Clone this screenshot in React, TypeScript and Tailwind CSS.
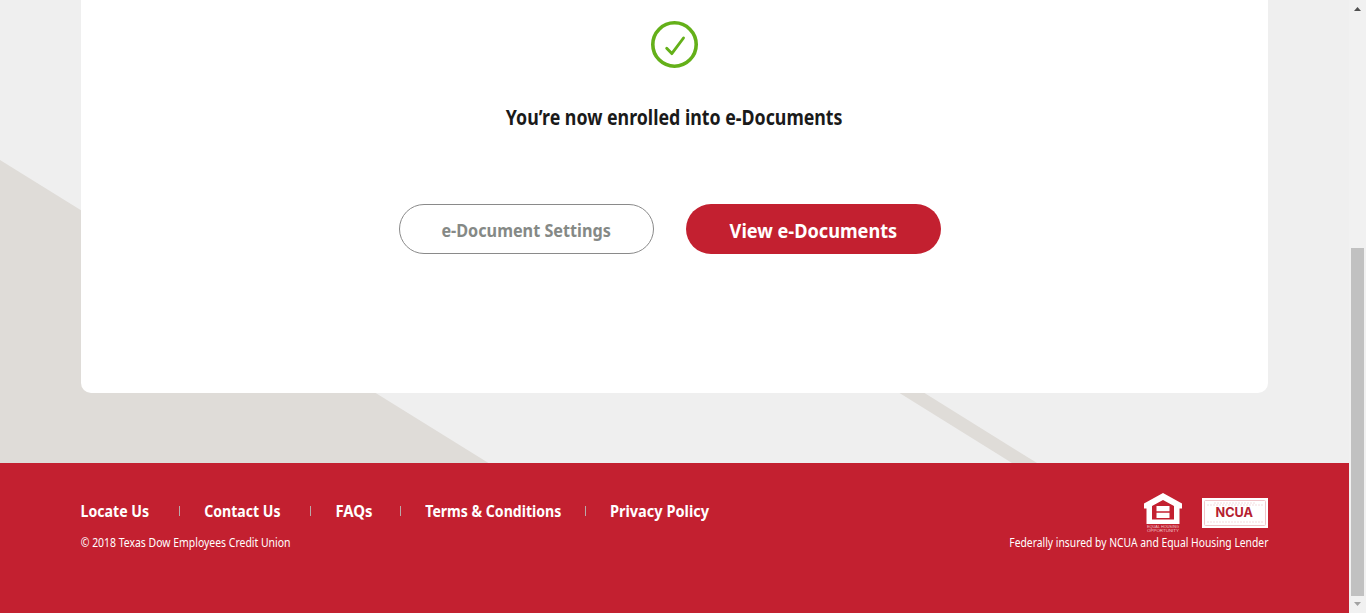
import type { ReactNode } from "react";

function Fit({ box, children, scale }: { box: string; scale: string; children: ReactNode }) {
  return (
    <span className={`flex justify-center whitespace-nowrap ${box}`}>
      <span className={`shrink-0 ${scale}`}>{children}</span>
    </span>
  );
}

const links = [
  { label: "Locate Us", box: "w-[68px]", scale: "scale-x-[0.885]", gap: "ml-[30px] mr-6" },
  { label: "Contact Us", box: "w-[77px]", scale: "scale-x-[0.88]", gap: "ml-[29px] mr-6" },
  { label: "FAQs", box: "w-[37px]", scale: "scale-x-[0.93]", gap: "ml-7 mr-6" },
  { label: "Terms & Conditions", box: "w-[136px]", scale: "scale-x-[0.88]", gap: "ml-6 mr-6" },
  { label: "Privacy Policy", box: "w-[100px]", scale: "scale-x-[0.91]", gap: "" },
];

function Backdrop() {
  return (
    <svg className="absolute inset-0" width="1349" height="463" viewBox="0 0 1349 463">
      <path fill="#dfdcd8" d="M0 160L488.500 463H0zM899.500 393L924.500 393L1037 463H1012z" />
    </svg>
  );
}

function HousingLogo() {
  return (
    <svg className="overflow-visible" width="38" height="42" viewBox="0 0 38 42">
      <path fill="#fff" fillRule="evenodd" d="M19 0L38 10.500V15.500H35.500V31H2.500V15.500H0V10.500zM19 7L8 13V26.500H30V13z" />
      <path fill="#fff" d="M12.500 13H25.500V18.300H12.500zM12.500 19.700H25.500V25H12.500z" />
      <g fill="#fff" fillOpacity="0.75" fontFamily="Liberation Sans, sans-serif" fontSize="4.200">
        <text x="3" y="35.300" textLength="32" lengthAdjust="spacingAndGlyphs">EQUAL HOUSING</text>
        <text x="3" y="39.300" textLength="32" lengthAdjust="spacingAndGlyphs">OPPORTUNITY</text>
      </g>
    </svg>
  );
}

function NcuaLogo() {
  return (
    <svg width="66" height="30" viewBox="0 0 66 30">
      <path fill="#fff" d="M0 0H66V30H0z" />
      <rect x="2.500" y="2.500" width="61" height="25" rx="1" fill="none" stroke="#f0c4c9" />
      <path d="M12 5H54M5 7H61M5 24H61" stroke="#f4dcdf" strokeDasharray="2 1" />
      <text x="13.500" y="19.300" fill="#b5202f" fontFamily="Inter, sans-serif" fontWeight="700" fontSize="12.500" textLength="37.500" lengthAdjust="spacingAndGlyphs">NCUA</text>
    </svg>
  );
}

export default function App() {
  return (
    <div className="flex h-[613px] w-[1366px] overflow-hidden bg-[#efefef] font-['Noto_Sans',sans-serif]">
      <div className="relative flex w-[1349px] flex-col">
        <Backdrop />
        <main className="relative mx-[81px] mb-[70px] flex h-[393px] w-[1187px] flex-col items-center rounded-b-[10px] bg-white pt-[21px]">
          <svg width="47" height="47" viewBox="0 0 47 47" fill="none" stroke="#64b019">
            <circle cx="23.500" cy="23.500" r="21.700" strokeWidth="3.600" />
            <path d="M15.700 27.200L20.800 32.600L32.500 17" strokeWidth="2.900" strokeLinecap="round" strokeLinejoin="round" />
          </svg>
          <h1 className="mt-[35px] text-[20.500px] leading-7 font-bold text-[#1a1a1a]">
            <Fit box="w-[337px]" scale="scale-x-[0.867]">You’re now enrolled into e-Documents</Fit>
          </h1>
          <div className="mt-[73px] mr-[9px] flex gap-8">
            <button className="flex h-[50px] w-[255px] items-center justify-center rounded-full border border-[#8a8a8a] pt-0.5 text-[18px] font-bold text-[#858986]">
              <Fit box="w-[170px]" scale="scale-x-[0.9]">e-Document Settings</Fit>
            </button>
            <button className="flex h-[50px] w-[255px] items-center justify-center rounded-full bg-[#c32030] pt-[3px] text-[20px] font-bold text-white">
              <Fit box="w-[167px]" scale="scale-x-[0.907]">View e-Documents</Fit>
            </button>
          </div>
        </main>
        <footer className="relative flex h-[150px] justify-between bg-[#c32030] px-[81px] pt-[30px] text-white">
          <div>
            <nav className="flex h-9 items-center text-[16px] font-bold">
              {links.map((l) => (
                <div key={l.label} className="flex items-center">
                  <Fit box={l.box} scale={l.scale}>{l.label}</Fit>
                  {l.gap && <span className={`h-2.5 w-px bg-[#b9a9a9] ${l.gap}`} />}
                </div>
              ))}
            </nav>
            <p className="mt-1.5 w-[210px] text-[12.500px] leading-4">
              <Fit box="w-[210px]" scale="scale-x-[0.835]">© 2018 Texas Dow Employees Credit Union</Fit>
            </p>
          </div>
          <div className="flex flex-col items-end">
            <div className="flex h-[42px] gap-5">
              <HousingLogo />
              <div className="pt-[5px]"><NcuaLogo /></div>
            </div>
            <p className="text-[12.500px] leading-4">
              <Fit box="w-[259px]" scale="scale-x-[0.826]">Federally insured by NCUA and Equal Housing Lender</Fit>
            </p>
          </div>
        </footer>
      </div>
      <div className="flex w-[17px] flex-col items-center bg-[#f1f1f1]">
        <svg width="17" height="17" viewBox="0 0 17 17"><path fill="#505050" d="M5 11L8.500 7L12 11z" /></svg>
        <div className="mt-[231px] h-[348px] w-[13px] bg-[#c1c1c1]" />
        <svg width="17" height="17" viewBox="0 0 17 17"><path fill="#a3a3a3" d="M5 6L8.500 10L12 6z" /></svg>
      </div>
    </div>
  );
}
